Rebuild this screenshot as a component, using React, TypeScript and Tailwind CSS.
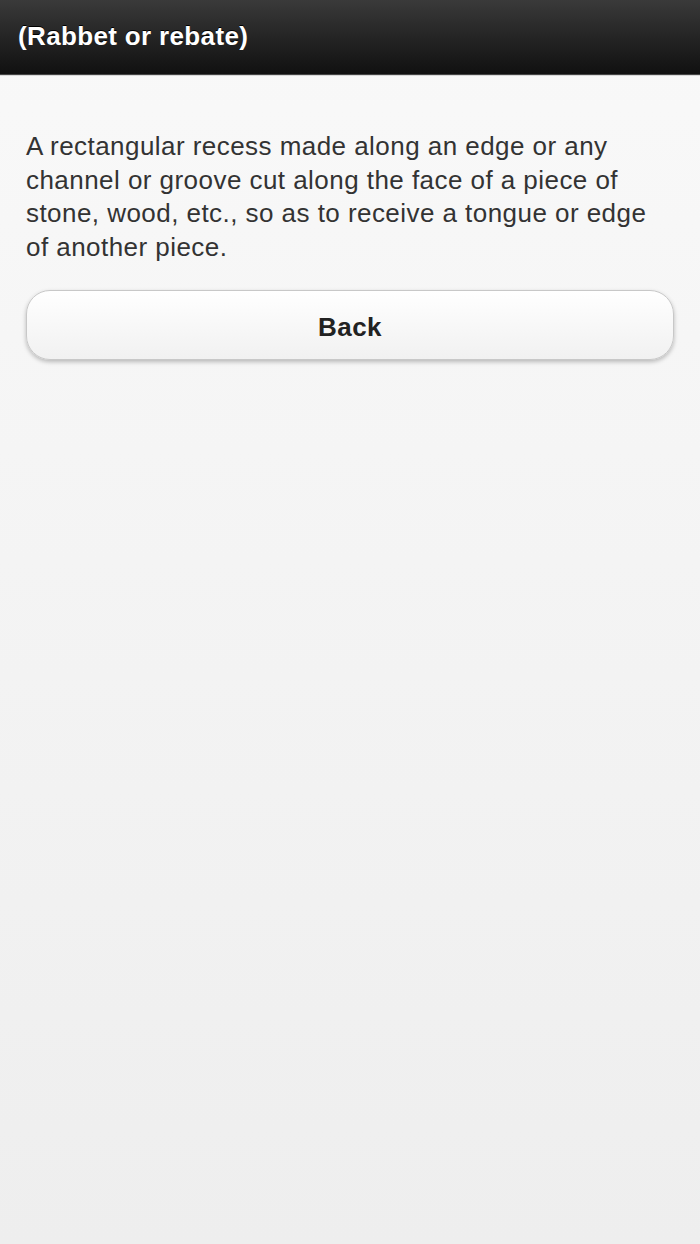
export default function App() {
  return (
    <div
      className="min-h-[1244px] w-full bg-gradient-to-b from-[#f9f9f9] to-[#eeeeee]"
      style={{ fontFamily: '"Liberation Sans", Arial, sans-serif' }}
    >
      <div className="h-[75px] bg-gradient-to-b from-[#3a3a3a] to-[#111111] border-b border-[#444] shadow-[0_1px_0_#d8d8d8] flex items-center px-[18px]">
        <h1 className="text-white font-bold text-[26px] tracking-[0.35px] leading-none pb-[2px] [text-shadow:0_-1px_0_#000]">
          (Rabbet or rebate)
        </h1>
      </div>
      <div className="px-[26px] pt-[55px]">
        <p className="text-[#333] text-[26px] leading-[33.7px] tracking-[0.45px]">
          A rectangular recess made along an edge or any channel or groove cut along the face of a piece of stone, wood, etc., so as to receive a tongue or edge of another piece.
        </p>
        <button className="mt-[25px] w-full h-[70px] rounded-[24px] border border-[#c8c8c8] bg-gradient-to-b from-white to-[#f1f1f1] shadow-[0_2px_4px_rgba(0,0,0,0.25)] flex items-center justify-center pt-[6px] text-[#222] font-bold text-[26px] tracking-[0.4px]">
          Back
        </button>
      </div>
    </div>
  );
}
